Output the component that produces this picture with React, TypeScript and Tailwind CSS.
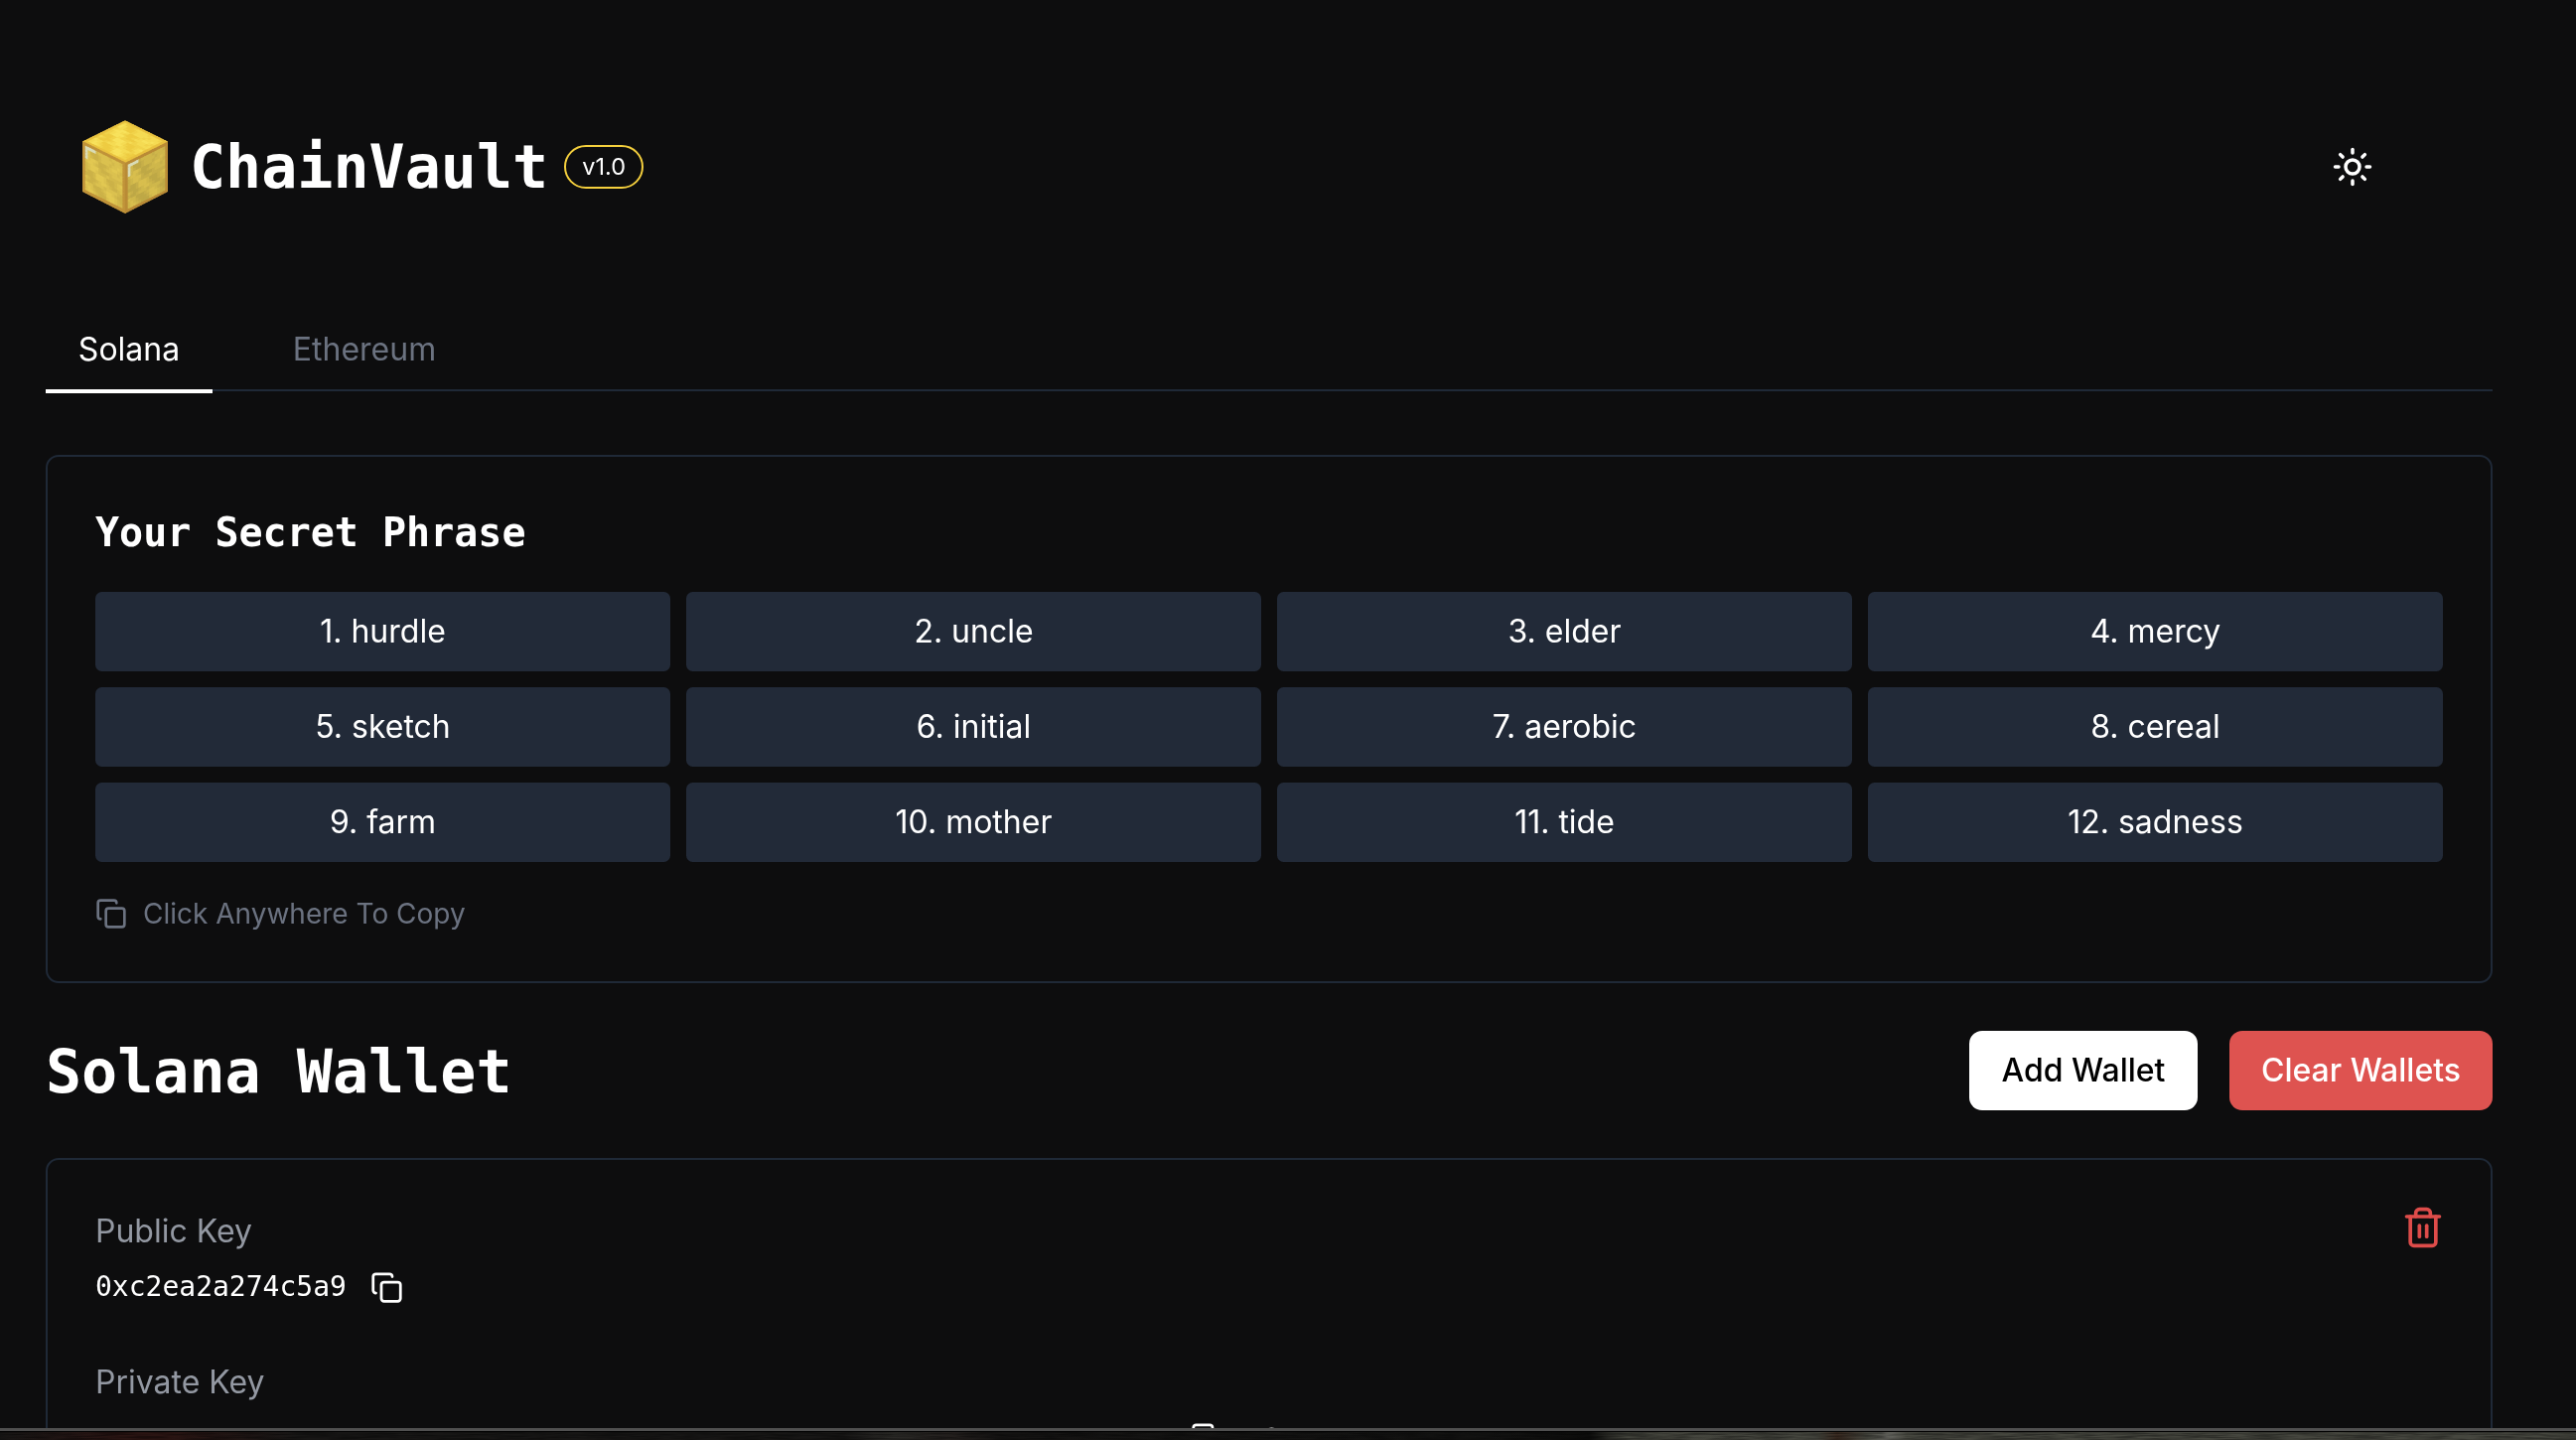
import { Copy, Eye, Sun, Trash2 } from "lucide-react";

const words = ["hurdle", "uncle", "elder", "mercy", "sketch", "initial", "aerobic", "cereal", "farm", "mother", "tide", "sadness"];

// seeded blotches so the block texture stays the same every render
const blotch = (x: number, y: number) => {
  const a = Math.sin((x + y) * 0.9 + Math.sin(y * 1.7) * 1.4);
  const b = Math.cos((x - y) * 0.6 + 1.3);
  return Math.floor(((a + b + 2) / 4) * 4) / 3;
};

const mix = (a: number[], b: number[], t: number) =>
  `rgb(${a.map((c, i) => Math.round(c + (b[i] - c) * t)).join(",")})`;

type FaceProps = { transform: string; from: number[]; to: number[]; rim: string; glint?: boolean };

const Face = ({ transform, from, to, rim, glint }: FaceProps) => {
  const cells = [];
  for (let y = 0; y < 16; y++) {
    for (let x = 0; x < 16; x++) {
      const edge = x === 0 || y === 0 || x === 15 || y === 15;
      let fill = edge ? rim : mix(from, to, blotch(x, y));
      if (glint && ((x === 1 && y > 0 && y < 5) || (y === 1 && x > 0 && x < 5))) fill = "#d9dcb6";
      cells.push(<rect key={`${x}-${y}`} x={x} y={y} width={1.4} height={1.4} fill={fill} />);
    }
  }
  return (
    <g transform={transform}>
      {cells}
    </g>
  );
};

const Logo = () => (
  <svg viewBox="0 0 86 94" className="h-[94px] w-[86px] shrink-0">
    <defs>
      <clipPath id="cube">
        <polygon points="43,0 86,21 86,72 43,94 0,72 0,21" />
      </clipPath>
    </defs>
    <g clipPath="url(#cube)">
      <Face transform="matrix(2.69 1.34 -2.69 1.34 43 0)" from={[238, 204, 66]} to={[248, 226, 92]} rim="#e9c23f" />
      <Face transform="matrix(2.69 1.34 0 3.19 0 21)" from={[204, 178, 72]} to={[226, 200, 82]} rim="#c09339" glint />
      <Face transform="matrix(2.69 -1.34 0 3.19 43 43)" from={[190, 168, 70]} to={[216, 190, 78]} rim="#b98b36" glint />
    </g>
  </svg>
);

const Strip = () => (
  <div className="absolute inset-x-0 bottom-0 h-[12px] border-t-[3px] border-[#505050] bg-black pt-px">
    <div className="relative h-full overflow-hidden bg-[linear-gradient(90deg,#161514_0px,#2a1412_120px,#2a1412_170px,#171615_300px,#171615_850px,#2a2926_900px,#231f1d_960px,#141312_1010px,#121211_1500px,#0c0c0b_1600px,#44453d_1640px,#45463e_1830px,#3a2a20_1850px,#45463e_1880px,#6a6a64_1900px,#45463e_1920px,#45463e_2594px)]">
      <svg className="absolute inset-0 h-full w-full opacity-35 mix-blend-multiply">
        <filter id="grit">
          <feTurbulence type="fractalNoise" baseFrequency="0.03 0.6" numOctaves="3" seed="4" />
          <feColorMatrix values="0 0 0 0 0  0 0 0 0 0  0 0 0 0 0  2.4 0 0 0 -0.7" />
        </filter>
        <rect width="100%" height="100%" filter="url(#grit)" />
      </svg>
    </div>
  </div>
);

export default function App() {
  return (
    <div className="relative h-[1450px] overflow-hidden bg-[#0d0d0e] font-['Inter',sans-serif] text-white">
      <div className="flex h-[394px] flex-col pl-[46px] pr-[84px]">
        <header className="flex items-center pl-[37px] pr-[120px] pt-[119px]">
          <Logo />
          <h1 className="ml-[22px] font-['DejaVu_Sans_Mono',monospace] text-[60px] leading-[98px] font-bold">ChainVault</h1>
          <span className="ml-[16px] flex h-[44px] w-[80px] items-center justify-center rounded-full border-[2.5px] border-[#f4cf3d] text-[23.5px]">v1.0</span>
          <Sun size={42} className="ml-auto" />
        </header>
        <nav className="mt-auto flex border-b-2 border-[#1f2937]">
          <button className="-mb-[4px] h-[86px] w-[168px] border-b-4 border-white pt-[2px] text-[32px]">Solana</button>
          <button className="-mb-[4px] ml-[47px] h-[86px] w-[212px] pb-[2px] text-[32px] text-[#6b7280]">Ethereum</button>
        </nav>
      </div>

      <main className="pl-[46px] pr-[84px] pt-[64px]">
        <section className="h-[532px] rounded-[13px] border-2 border-[#1f2937] px-[48px] pt-[47px]">
          <h2 className="font-['DejaVu_Sans_Mono',monospace] text-[40px] leading-[58px] font-bold">Your Secret Phrase</h2>
          <div className="mt-[31px] grid grid-cols-4 gap-[16px]">
            {words.map((word, i) => (
              <div key={word} className="flex h-[80px] items-center justify-center rounded-[6.5px] bg-[#222a38] text-[32px]">
                {i + 1}. {word}
              </div>
            ))}
          </div>
          <div className="mt-[32px] flex h-[40px] items-center gap-[16px] text-[28px] text-[#6b7280]">
            <Copy size={32} />
            <span>Click Anywhere To Copy</span>
          </div>
        </section>

        <div className="mt-[48px] flex h-[80px] items-center justify-between">
          <h2 className="mt-[2px] font-['DejaVu_Sans_Mono',monospace] text-[60px] font-bold">Solana Wallet</h2>
          <div className="flex gap-[32px]">
            <button className="h-[80px] w-[230px] rounded-[13px] bg-white text-[32px] font-medium text-black">Add Wallet</button>
            <button className="h-[80px] w-[265px] rounded-[13px] bg-[#de5350] text-[32px] font-medium">Clear Wallets</button>
          </div>
        </div>

        <section className="relative mt-[48px] h-[400px] rounded-[13px] border-2 border-[#1f2937] px-[48px] pt-[52px]">
          <p className="text-[32px] leading-[40px] text-[#9398a2]">Public Key</p>
          <div className="mt-[16px] flex items-center gap-[24px]">
            <span className="font-['DejaVu_Sans_Mono',monospace] text-[28px] leading-[40px]">0xc2ea2a274c5a9</span>
            <Copy size={33} />
          </div>
          <p className="mt-[56px] text-[32px] leading-[40px] text-[#9398a2]">Private Key</p>
          <div className="absolute left-[1151px] top-[264px] flex gap-[32px]">
            <Copy size={33} />
            <Eye size={33} />
          </div>
          <Trash2 size={44} className="absolute right-[46px] top-[46px] text-[#de4c4a]" />
        </section>
      </main>

      <Strip />
    </div>
  );
}
